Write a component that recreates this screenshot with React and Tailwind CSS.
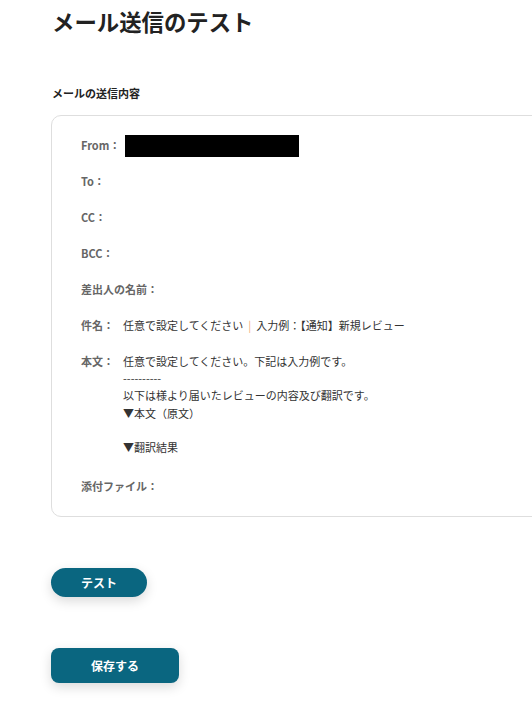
import React from "react";

const font = { fontFamily: '"Noto Sans CJK JP", "Noto Sans", sans-serif' };

function Row({ label, children, className = "" }) {
  return (
    <div className={"flex items-start leading-[17px] " + className}>
      <div className="w-[42px] shrink-0 whitespace-nowrap font-bold text-[#666]">{label}</div>
      <div className="text-[#333]">{children}</div>
    </div>
  );
}

export default function App() {
  return (
    <div className="min-h-[705px] w-[532px] overflow-hidden bg-white" style={font}>
      <div className="pl-[52px] pt-[6px]">
        <h1 className="text-[22.4px] font-bold leading-[30px] text-[#222]">メール送信のテスト</h1>
        <div className="mt-[49px] text-[11px] font-bold leading-[16px] text-[#222]">メールの送信内容</div>
      </div>
      <div className="ml-[51px] mt-[14px] w-[520px] rounded-[10px] border border-[#dedede] pl-[29px] pt-[21px] pb-[21px] text-[11px]">
        <div className="flex flex-col gap-[19px]">
          <div className="flex h-[17px] items-center leading-[17px]">
            <div className="w-[42px] shrink-0 whitespace-nowrap font-bold text-[#666]">From：</div>
            <div className="ml-[2px] h-[22px] w-[174px] bg-black" />
          </div>
          <Row label="To：" />
          <Row label="CC：" />
          <Row label="BCC：" />
          <Row label="差出人の名前：" />
          <Row label="件名：">
            任意で設定してください<span className="mx-[5px] text-[#f4ae78]">|</span>入力例：【通知】新規レビュー
          </Row>
          <div className="mb-[3px] flex items-start leading-[17.2px]">
            <div className="w-[42px] shrink-0 whitespace-nowrap font-bold text-[#666]">本文：</div>
            <div className="text-[#333]">
              <div>任意で設定してください。下記は入力例です。</div>
              <div>----------</div>
              <div>以下は様より届いたレビューの内容及び翻訳です。</div>
              <div>▼本文（原文）</div>
              <div>&nbsp;</div>
              <div>▼翻訳結果</div>
            </div>
          </div>
          <Row label="添付ファイル：" />
        </div>
      </div>
      <div className="ml-[51px] mt-[51px]">
        <button className="flex h-[29px] w-[96px] items-center justify-center rounded-full bg-[#0a6680] text-[12px] font-bold text-white shadow-[0_4px_12px_rgba(0,0,0,0.15)]">
          テスト
        </button>
        <button className="mt-[51px] flex h-[35px] w-[128px] items-center justify-center rounded-[8px] bg-[#0a6680] text-[12px] font-bold text-white shadow-[0_4px_12px_rgba(0,0,0,0.15)]">
          保存する
        </button>
      </div>
    </div>
  );
}
